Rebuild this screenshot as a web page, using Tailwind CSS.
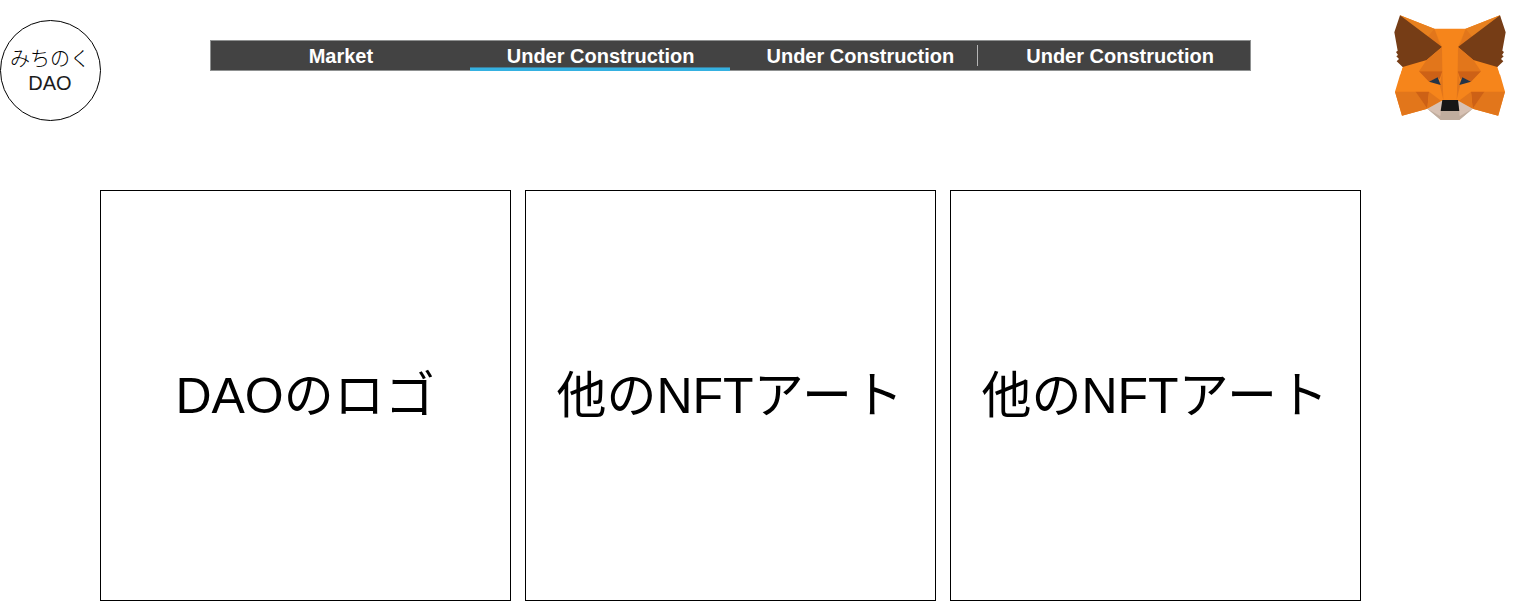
<!DOCTYPE html>
<html lang="ja">
<head>
<meta charset="utf-8">
<title>みちのくDAO</title>
<script src="https://cdn.jsdelivr.net/npm/@tailwindcss/browser@4"></script>
</head>
<body class="h-[601px] overflow-hidden bg-white text-black font-['Liberation_Sans','Noto_Sans_CJK_JP',sans-serif]">
<header class="flex h-[190px] items-start">
  <div class="mt-5 flex size-[101px] shrink-0 flex-col items-center justify-center rounded-full border border-black pr-px text-xl leading-6 text-[#1c1c1c]">
    <span class="font-light whitespace-nowrap text-black">みちのく</span><span>DAO</span>
  </div>
  <nav class="relative mt-10 ml-[109px] grid h-[31px] w-[1041px] shrink-0 grid-cols-4 border border-[#8f9191] bg-[#434343] text-center text-xl leading-[30px] font-bold text-white">
    <a>Market</a><a>Under Construction</a><a>Under Construction</a><a>Under Construction</a>
    <span class="absolute top-[26px] left-[259px] h-1 w-[260px] border-t border-[#3d7f9b] bg-[#35b1e1]"></span>
    <span class="absolute top-1 left-[766px] h-[21px] w-px bg-[#b5b5b5]"></span>
  </nav>
  <svg class="mt-[5px] ml-[129px] h-[125px] w-[141px] shrink-0" viewBox="0 0 423 375">
    <path fill="#f6851b" d="M60 31 163 71H257L360 31 376 180 354 187 375 260 355 332 278 311H142L66 332 45 260 67 187Z"/>
    <defs>
      <g id="half">
        <path fill="#fff" d="M40 25H60L43 82 68 186 60 210 30 180Z"/>
        <path fill="#e8801e" d="M60 31 163 71 186 126Z"/>
        <path fill="#e2761b" d="M163 71 177 112 186 126 140 100Z"/>
        <path fill="#763d16" d="M60 31 186 126 140 165 68 186 50 169 57 162 49 154 54 150 48 141 53 137 43 82Z"/>
        <path fill="#e2761b" d="M186 126 140 165 117 199 187 199ZM45 260H108L142 311 66 332ZM187 199 190 285 179 239Z"/>
        <path fill="#cd6116" d="M117 199H187L179 222 172 219 147 230ZM107 260H147L142 311Z"/>
        <path fill="#e2761b" d="M147 260 184 288 142 311Z"/>
        <path fill="#233447" d="M147 230 173 217 182 240Z"/>
      </g>
    </defs>
    <use href="#half"/>
    <use href="#half" transform="translate(420 0) scale(-1 1)"/>
    <path fill="#d7c1b3" d="M142 311 184 288H236L278 311 238 345H182Z"/>
    <path fill="#c0ad9e" d="M142 311 181 330V318H239V330L278 311 238 345H182Z"/>
    <path fill="#d7c1b3" d="M142 311 181 318V334ZM278 311 239 318V334Z"/>
    <path fill="#161616" d="M187 285H234L238 318H182Z"/>
  </svg>
</header>
<main class="ml-[100px] flex gap-[14px] text-[50px] leading-none whitespace-nowrap">
  <section class="flex size-[411px] items-center justify-center border border-black"><h2>DAO<span class="tracking-[0.6px]">のロゴ</span></h2></section>
  <section class="flex size-[411px] items-center justify-center border border-black"><h2>他のNFT<span class="tracking-[1.3px]">アート</span></h2></section>
  <section class="flex size-[411px] items-center justify-center border border-black"><h2>他のNFT<span class="tracking-[1.3px]">アート</span></h2></section>
</main>
</body>
</html>
